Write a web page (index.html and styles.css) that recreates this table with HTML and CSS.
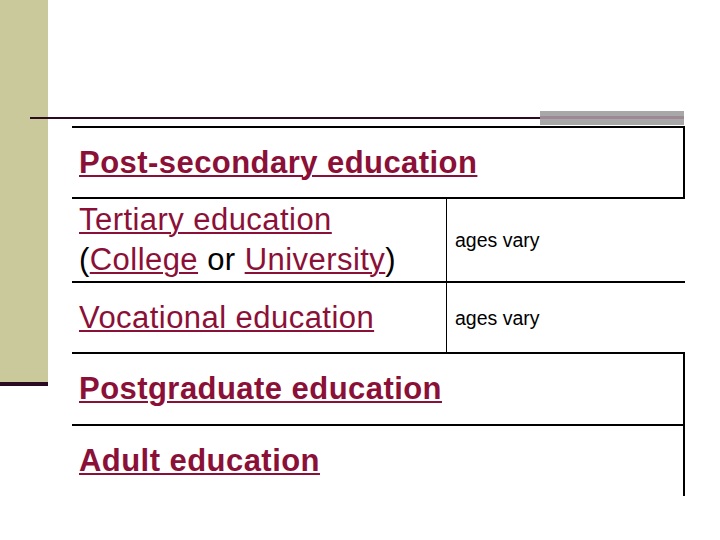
FILE: index.html
```html
<!DOCTYPE html>
<html lang="en">
<head>
<meta charset="utf-8">
<title>Post-secondary education</title>
<link rel="stylesheet" href="styles.css">
</head>
<body>
<div class="slide">
  <div class="sidebar"></div>
  <div class="band">
    <div class="rule"></div>
    <div class="tab"><div class="tab-stripe"></div></div>
  </div>
  <div class="table">
    <div class="row row-1 boxed">
      <div class="cell"><a class="link bold">Post-secondary education</a></div>
    </div>
    <div class="row row-2">
      <div class="cell main main-2"><span><a class="link">Tertiary education</a><br>(<a class="link">College</a> or <a class="link">University</a>)</span></div>
      <div class="cell side">ages vary</div>
    </div>
    <div class="row row-3">
      <div class="cell main"><a class="link">Vocational education</a></div>
      <div class="cell side">ages vary</div>
    </div>
    <div class="row row-4 boxed">
      <div class="cell"><a class="link bold">Postgraduate education</a></div>
    </div>
    <div class="row row-5 boxed">
      <div class="cell"><a class="link bold">Adult education</a></div>
    </div>
  </div>
</div>
</body>
</html>
```

FILE: styles.css
```css
html, body {
  margin: 0;
  padding: 0;
  background: #ffffff;
}

.slide {
  width: 720px;
  height: 540px;
  display: grid;
  grid-template-columns: 30px 18px 24px 613px 35px;
  grid-template-rows: 111px 15px auto 1fr;
  overflow: hidden;
}

.sidebar {
  grid-column: 1 / 3;
  grid-row: 1 / 4;
  align-self: start;
  height: 382px;
  background: #c9c99b;
  border-bottom: 4px solid #2b0b22;
}

.band {
  grid-column: 2 / 5;
  grid-row: 2;
  display: flex;
  align-items: flex-start;
}

.rule {
  flex: 1;
  height: 2px;
  margin-top: 6px;
  background: #2b0b22;
}

.tab {
  width: 144px;
  height: 14px;
  margin-right: 1px;
  background: #a8a8a8;
  display: flex;
  flex-direction: column;
}

.tab-stripe {
  height: 3px;
  margin-top: 5px;
  background: #9d8894;
}

.table {
  grid-column: 4 / 5;
  grid-row: 3;
  font-family: "Liberation Sans", Arial, sans-serif;
  font-size: 31px;
  line-height: 38px;
  letter-spacing: 0.45px;
  color: #000000;
}

.row {
  display: flex;
  box-sizing: border-box;
  border-top: 2px solid #000000;
}

.row-1 { height: 71px; }
.row-2 { height: 84px; }
.row-3 { height: 71px; }
.row-4 { height: 72px; }
.row-5 { height: 72px; }

.boxed {
  border-right: 2px solid #000000;
}

.cell {
  display: flex;
  align-items: center;
  padding-left: 7px;
}

.main {
  box-sizing: border-box;
  width: 375px;
  border-right: 1px solid #000000;
}

.main-2 {
  line-height: 40px;
}

.side {
  flex: 1;
  padding-left: 8px;
  font-size: 19.5px;
  line-height: 24px;
  letter-spacing: 0;
}

.link {
  color: #8b1038;
  text-decoration: underline;
  text-decoration-thickness: 2px;
  text-underline-offset: 2px;
}

.bold {
  font-weight: bold;
}
```
